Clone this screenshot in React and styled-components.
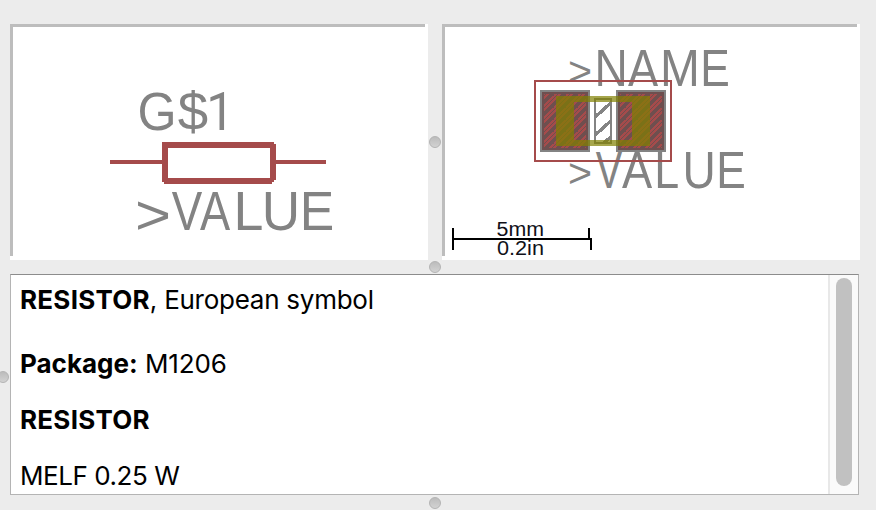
import React from 'react';
import styled, { createGlobalStyle } from 'styled-components';

const GlobalStyle = createGlobalStyle`
  * { box-sizing: border-box; }
  body { margin: 0; background: #ececec; overflow: hidden; }
`;

const Window = styled.main`
  width: 876px;
  height: 510px;
  padding: 24px 0 0;
  display: grid;
  grid-template-columns: 10px 850px;
  grid-template-rows: 236px 14px 221px 15px;
  background: #ececec;
  font-family: Inter, "Open Sans", sans-serif;
`;

const Previews = styled.section`
  grid-column: 2;
  display: grid;
  grid-template-columns: 418px 14px 418px;
  align-items: center;
`;

const Preview = styled.div`
  height: 236px;
  background:
    linear-gradient(#bdbdbd, #bdbdbd) 0 0 / calc(100% - 3px) 3px no-repeat,
    linear-gradient(#bdbdbd, #bdbdbd) 0 0 / 3px calc(100% - 4px) no-repeat,
    #fff;
`;

const Drawing = styled.svg`
  display: block;
  width: 418px;
  height: 236px;
`;

const Handle = styled.i`
  display: block;
  justify-self: ${(p) => (p.$edge ? 'start' : 'center')};
  align-self: center;
  width: 12px;
  height: 12px;
  margin-left: ${(p) => (p.$edge ? '-3px' : '0')};
  border-radius: 50%;
  border: 1px solid #b3b3b3;
  background: linear-gradient(#bcbcbc, #d2d2d2);
`;

const Divider = styled.div`
  grid-column: 2;
  display: grid;
`;

const SideGutter = styled.div`
  grid-column: 1;
  display: grid;
  padding-bottom: 15px;
`;

const Description = styled.section`
  grid-column: 2;
  display: grid;
  grid-template-columns: 1fr 30px;
  width: 849px;
  height: 221px;
  border: 1px solid #b4b4b4;
  border-top-color: #8c8c8c;
  background: #fff;
`;

const Copy = styled.div`
  padding: 9px 0 0 9px;
  overflow: hidden;
  color: #000;
  font-size: 26px;
  line-height: 32px;
`;

const Line = styled.p`
  margin: 0 0 ${(p) => p.$gap || 0}px;
  height: 32px;
  white-space: nowrap;
  letter-spacing: ${(p) => p.$track || 0}px;
`;

const Strong = styled.b`
  font-weight: 700;
  letter-spacing: ${(p) => p.$track || 0}px;
`;

const Track = styled.div`
  padding: 3px 0 0 6px;
  border-left: 2px solid #e8e8e8;
  background: #fafafa;
`;

const Thumb = styled.div`
  width: 16px;
  height: 208px;
  border-radius: 8px;
  background: #c1c1c1;
`;

const GREY = '#838383';
const RED = '#a54b4b';

// Advance width, left ink edge and right ink edge, in units of 1/2048 em.
const METRICS = {
  V: [1366, 9, 1353], A: [1366, 3, 1362], L: [1139, 168, 1082],
  U: [1479, 159, 1314], E: [1366, 168, 1278], N: [1479, 156, 1311],
  M: [1706, 168, 1537], G: [1593, 103, 1488], $: [1139, 80, 1055],
  1: [1150, 156, 729], '>': [1196, 101, 1096],
};

function Lettering({ glyphs, y, size, arrowSize, arrowY }) {
  return (
    <text fill={GREY} fontFamily='"Liberation Sans", Arial, sans-serif' fontSize={size}>
      {glyphs.map(([ch, left, right]) => {
        const [adv, a, b] = METRICS[ch];
        const unit = (right - left) / (b - a);
        return (
          <tspan
            key={ch + left}
            x={left - a * unit}
            y={ch === '>' ? arrowY : y}
            fontSize={ch === '>' ? arrowSize : size}
            fontFamily={ch === '1' ? 'Roboto' : undefined}
            textLength={adv * unit}
            lengthAdjust="spacingAndGlyphs"
          >{ch}</tspan>
        );
      })}
    </text>
  );
}

function Symbol() {
  return (
    <Drawing viewBox="10 24 418 236">
      <Lettering y={130} size={53.5} glyphs={[['G', 140, 174], ['$', 180, 206], ['1', 210, 224]]} />
      <Lettering y={230} size={55} arrowSize={55} arrowY={233.5}
        glyphs={[['>', 138, 168], ['V', 172, 202], ['A', 200, 230], ['L', 238, 262], ['U', 266, 296], ['E', 304, 332]]} />
      <g shapeRendering="crispEdges">
        <path d="M110 162H162M276 162H326" stroke={RED} strokeWidth="4" />
        <path d="M162 142H274V144H276V180H274V182H272V184H164V182H162ZM168 148V178H270V148Z" fill={RED} fillRule="evenodd" />
      </g>
    </Drawing>
  );
}

function Pad({ x }) {
  return (
    <g>
      <rect x={x} y="90" width="50" height="62" fill={GREY} />
      <rect x={x + 2} y="92" width="46" height="58" fill="#6e4f4f" />
      <rect x={x + 4} y="94" width="42" height="54" fill="url(#padHatch)" />
    </g>
  );
}

function Footprint() {
  return (
    <Drawing viewBox="442 24 418 236" shapeRendering="crispEdges">
      <defs>
        <pattern id="padHatch" width="12" height="12" patternUnits="userSpaceOnUse">
          <path d="M-4 6L6 -4M-4 10L10 -4M2 12L12 2M4 14L14 4" stroke={RED} strokeWidth="2.2" />
        </pattern>
        <clipPath id="body"><rect x="596" y="100" width="14" height="42" /></clipPath>
      </defs>
      <Lettering y={86} size={52.3} arrowSize={40} arrowY={84.5}
        glyphs={[['>', 570, 590], ['N', 598, 624], ['A', 628, 658], ['M', 664, 696], ['E', 704, 728]]} />
      <Lettering y={188} size={52.3} arrowSize={40} arrowY={186.5}
        glyphs={[['>', 570, 590], ['V', 596, 622], ['A', 622, 652], ['L', 658, 678], ['U', 686, 712], ['E', 720, 744]]} />
      <rect x="535" y="81" width="136" height="80" fill="none" stroke={RED} strokeWidth="2" />
      <Pad x={540} />
      <Pad x={616} />
      <rect x="595" y="99" width="16" height="44" fill="none" stroke={GREY} strokeWidth="2" />
      <path d="M594 118L612 102M594 136L612 120M600 146L612 136" stroke={GREY} strokeWidth="3.4" clipPath="url(#body)" />
      <path d="M556 96H650V146H556ZM574 102V140H632V102Z" fill="#808000" fillOpacity=".7" fillRule="evenodd" />
      <path d="M453 228V250M452 239H592M589 228V240M591 238V250" stroke="#000" strokeWidth="2" />
      <g fontFamily='"Liberation Sans", Arial, sans-serif' fontSize="19.5" fill="#101018">
        <text x="496.5" y="236" textLength="47.5" lengthAdjust="spacingAndGlyphs">5mm</text>
        <text x="497" y="255" textLength="47" lengthAdjust="spacingAndGlyphs">0.2in</text>
      </g>
    </Drawing>
  );
}

export default function App() {
  return (
    <>
      <GlobalStyle />
      <Window>
        <Previews>
          <Preview><Symbol /></Preview>
          <Handle />
          <Preview><Footprint /></Preview>
        </Previews>
        <Divider><Handle /></Divider>
        <SideGutter><Handle $edge /></SideGutter>
        <Description>
          <Copy>
            <Line $gap={32} $track={-0.26}><Strong $track={0.25}>RESISTOR</Strong>, European symbol</Line>
            <Line $gap={24} $track={-0.1}><Strong $track={0}>Package:</Strong> M1206</Line>
            <Line $gap={24}><Strong $track={0.25}>RESISTOR</Strong></Line>
            <Line $track={-0.45}>MELF 0.25 W</Line>
          </Copy>
          <Track><Thumb /></Track>
        </Description>
        <Divider><Handle /></Divider>
      </Window>
    </>
  );
}
